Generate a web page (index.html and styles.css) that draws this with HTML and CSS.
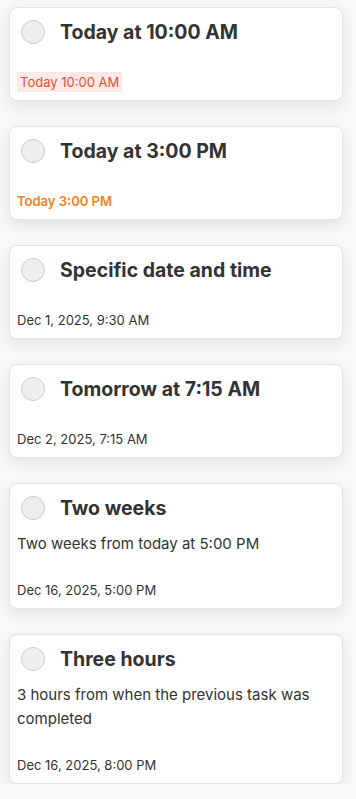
FILE: index.html
```html
<!DOCTYPE html>
<html>
<head>
<meta charset="utf-8">
<link rel="stylesheet" href="styles.css">
</head>
<body>
<div class="list">
  <div class="card">
    <div class="head"><span class="check"></span><span class="title">Today at 10:00 AM</span></div>
    <div class="date date-overdue"><span class="chip">Today 10:00 AM</span></div>
  </div>
  <div class="card">
    <div class="head"><span class="check"></span><span class="title">Today at 3:00 PM</span></div>
    <div class="date date-today">Today 3:00 PM</div>
  </div>
  <div class="card">
    <div class="head"><span class="check"></span><span class="title">Specific date and time</span></div>
    <div class="date">Dec 1, 2025, 9:30 AM</div>
  </div>
  <div class="card">
    <div class="head"><span class="check"></span><span class="title">Tomorrow at 7:15 AM</span></div>
    <div class="date">Dec 2, 2025, 7:15 AM</div>
  </div>
  <div class="card">
    <div class="head"><span class="check"></span><span class="title">Two weeks</span></div>
    <p class="desc">Two weeks from today at 5:00 PM</p>
    <div class="date">Dec 16, 2025, 5:00 PM</div>
  </div>
  <div class="card">
    <div class="head"><span class="check"></span><span class="title">Three hours</span></div>
    <p class="desc">3 hours from when the previous task was completed</p>
    <div class="date">Dec 16, 2025, 8:00 PM</div>
  </div>
</div>
</body>
</html>
```
FILE: styles.css
```css
* { box-sizing: border-box; }
html, body {
  margin: 0;
  padding: 0;
  background: #f8f8f8;
  font-family: Inter, "Liberation Sans", sans-serif;
  color: #333333;
}
.list {
  display: flex;
  flex-direction: column;
  gap: 25px;
  padding: 7px 0 0 9px;
  width: 343px;
}
.card {
  background: #ffffff;
  border: 1px solid #e2e2ea;
  border-radius: 8px;
  box-shadow: 0 5px 14px rgba(0, 0, 0, 0.09);
  padding: 12px 12px 8px 7px;
  display: flex;
  flex-direction: column;
}
.head {
  display: flex;
  align-items: center;
  gap: 15px;
  padding-left: 4px;
  height: 24px;
}
.check {
  width: 24px;
  height: 24px;
  border-radius: 50%;
  background: #eeeeee;
  border: 1px solid #cccccc;
  flex: none;
}
.title {
  font-size: 19.5px;
  font-weight: 700;
  line-height: 24px;
  color: #333333;
}
.desc {
  margin: 12px 0 0 0;
  font-size: 15px;
  line-height: 24px;
  color: #333333;
}
.date {
  margin-top: 28px;
  font-size: 13px;
  line-height: 20px;
  height: 20px;
  color: #333333;
}
.desc + .date { margin-top: 24px; }
.date-overdue .chip {
  display: inline-block;
  background: #fde8e8;
  color: #d65438;
  padding: 0 3px;
  line-height: 20px;
}
.date-today {
  color: #f5821f;
  font-weight: 600;
}
```
